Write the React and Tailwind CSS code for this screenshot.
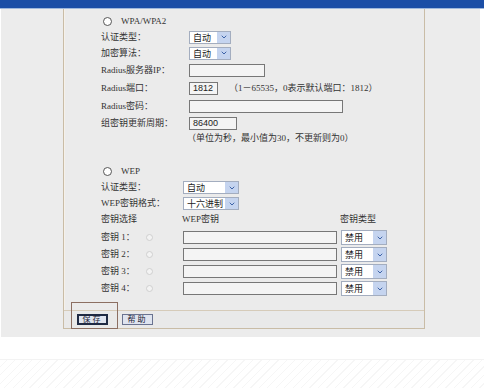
import React from "react";
import { ChevronDown } from "lucide-react";

const FONT = "font-['Liberation_Serif','Noto_Sans_CJK_SC',serif]";

const Select = ({ text, className }) => (
  <div className={`flex items-stretch border border-[#a3adbf] bg-white ${className}`}>
    <span className="flex-1 pl-[3px] text-[9px] leading-none flex items-center text-[#222] font-['Noto_Sans_CJK_SC',sans-serif]">
      {text}
    </span>
    <span className="w-[13px] bg-[#c5d4ef] flex items-center justify-center">
      <ChevronDown size={8} strokeWidth={3} className="text-[#3d63a8]" />
    </span>
  </div>
);

const Box = ({ className, children }) => (
  <div
    className={`border border-[#777] bg-[#f4f4f4] text-[9px] leading-none pl-[3px] flex items-center text-[#222] font-['Liberation_Sans',sans-serif] ${className}`}
  >
    {children}
  </div>
);

const Row = ({ label, className, labelW = "w-[88px]", children }) => (
  <div className={`flex items-center ${className}`}>
    <span className={`${labelW} shrink-0 text-[9px] leading-none text-[#333]`}>{label}</span>
    {children}
  </div>
);

const Radio = ({ faint }) => (
  <span
    className={`inline-block rounded-full border ${
      faint ? "w-[7px] h-[7px] border-[#cfcfcf] bg-[#f3f3f3]" : "w-[9px] h-[9px] border-[#555] bg-white"
    }`}
  />
);

const KeyRow = ({ n }) => (
  <div className="flex items-center h-[17px]">
    <span className="w-[45px] shrink-0 text-[9px] leading-none text-[#333]">密钥 {n}：</span>
    <span className="w-[37px] shrink-0 flex">
      <Radio faint />
    </span>
    <Box className="w-[154px] h-[13px]" />
    <Select text="禁用" className="ml-[4px] w-[46px] h-[15px]" />
  </div>
);

export default function App() {
  return (
    <div className={`w-[484px] h-[388px] overflow-hidden bg-white ${FONT}`}>
      <div className="h-[9px] bg-[#1b4ea6] border-b border-[#9fb8dc]" />
      <div className="ml-[1px] w-[479px] h-[328px] bg-[#ececec]">
        <div className="relative ml-[62px] w-[362px] h-[320px] border-x border-b border-[#c9bca6] shadow-[inset_1px_0_#f5f1ea] bg-[#ebebeb] flex flex-col">
          <div className="pl-[37px] pt-[4px] flex flex-col">
            <div className="flex items-center h-[16px] pl-[2px] gap-[9px]">
              <Radio />
              <span className="text-[9px] leading-none text-[#333]">WPA/WPA2</span>
            </div>
            <Row label="认证类型：" className="h-[16px]">
              <Select text="自动" className="w-[42px] h-[13px]" />
            </Row>
            <Row label="加密算法：" className="h-[16px]">
              <Select text="自动" className="w-[42px] h-[13px]" />
            </Row>
            <Row label="Radius服务器IP：" className="h-[18px]">
              <Box className="w-[76px] h-[13px]" />
            </Row>
            <Row label="Radius端口：" className="h-[18px]">
              <Box className="w-[29px] h-[13px]">1812</Box>
              <span className="ml-[11px] text-[9px] leading-none text-[#333]">
                （1－65535，0表示默认端口：1812）
              </span>
            </Row>
            <Row label="Radius密码：" className="h-[18px]">
              <Box className="w-[154px] h-[13px]" />
            </Row>
            <Row label="组密钥更新周期：" className="h-[16px]">
              <Box className="w-[48px] h-[13px]">86400</Box>
            </Row>
            <div className="h-[14px] pl-[86px] flex items-center text-[9px] leading-none text-[#333]">
              （单位为秒，最小值为30，不更新则为0）
            </div>

            <div className="mt-[18px] flex items-center h-[16px] pl-[2px] gap-[9px]">
              <Radio />
              <span className="text-[9px] leading-none text-[#333]">WEP</span>
            </div>
            <Row label="认证类型：" labelW="w-[82px]" className="h-[17px]">
              <Select text="自动" className="w-[56px] h-[13px]" />
            </Row>
            <Row label="WEP密钥格式：" labelW="w-[82px]" className="h-[15px]">
              <Select text="十六进制" className="w-[56px] h-[13px]" />
            </Row>
            <div className="flex items-center h-[17px] text-[9px] leading-none text-[#333]">
              <span className="w-[81px]">密钥选择</span>
              <span className="w-[158px]">WEP密钥</span>
              <span>密钥类型</span>
            </div>
            <div className="mt-[1px]">
              <KeyRow n="1" />
              <KeyRow n="2" />
              <KeyRow n="3" />
              <KeyRow n="4" />
            </div>
          </div>

          <div className="mt-auto h-[18px] border-t border-[#d6cbb9] bg-[#e9e9e9] flex items-center pl-[13px] gap-[14px]">
            <button className="w-[31px] h-[11px] border-2 border-[#1f2a44] bg-[#dfe4ef] text-[8px] leading-none text-[#223] tracking-[2px] flex items-center justify-center">
              保存
            </button>
            <button className="w-[31px] h-[11px] border border-[#6a7390] bg-[#dfe4ef] text-[8px] leading-none text-[#223] tracking-[2px] flex items-center justify-center">
              帮助
            </button>
          </div>

          <div className="absolute left-[7px] top-[293px] w-[47px] h-[27px] border border-[#8c6f62] pointer-events-none" />
        </div>
      </div>
      <div className="h-[51px] bg-[repeating-linear-gradient(135deg,#ffffff_0px,#ffffff_5px,#f6f6f6_5px,#f6f6f6_6px)]">
        <div className="mt-[22px] h-px bg-[#f3f3f3]" />
      </div>
    </div>
  );
}
